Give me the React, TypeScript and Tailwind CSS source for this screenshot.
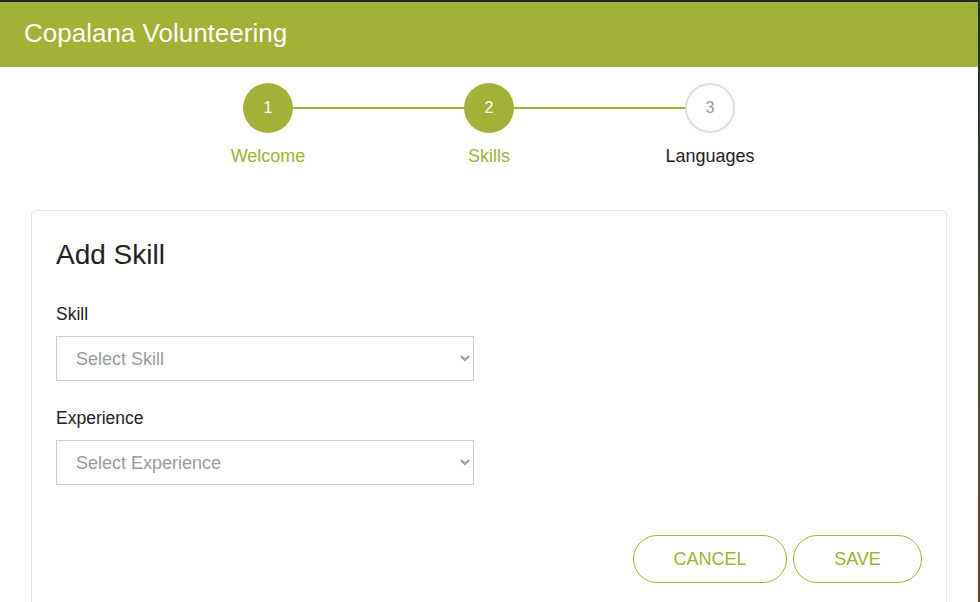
import React from "react";

function Step({ n, label, active }: { n: number; label: string; active: boolean }) {
  return (
    <div className="flex w-[221px] flex-col items-center">
      <div
        className={
          active
            ? "relative z-10 flex h-[50px] w-[50px] items-center justify-center rounded-full bg-[#a2b036] text-[16px] text-white"
            : "relative z-10 flex h-[50px] w-[50px] items-center justify-center rounded-full border-2 border-[#dedede] bg-white text-[16px] text-[#999]"
        }
      >
        {n}
      </div>
      <div
        className={
          active
            ? "mt-[11px] text-[18px] leading-[24px] text-[#a2b036]"
            : "mt-[11px] text-[18px] leading-[24px] text-[#222]"
        }
      >
        {label}
      </div>
    </div>
  );
}

export default function App() {
  return (
    <div
      className="flex min-h-[602px] w-[980px] overflow-hidden bg-gradient-to-b from-[#1d2c2c] via-[#4a4a38] to-[#5b4a2c]"
      style={{ fontFamily: '"Liberation Sans", Arial, sans-serif' }}
    >
      <div className="mt-[2px] flex h-[600px] w-[978px] flex-col bg-white">
        <div className="flex h-[65px] items-center bg-[#a2b036] pb-[2px] pl-[24px] text-[26px] text-white">
          Copalana Volunteering
        </div>
        <div className="relative mt-[16px] flex justify-center">
          <div className="absolute left-[268px] right-[268px] top-[24px] h-[2px] bg-[#a2b036]" />
          <Step n={1} label="Welcome" active />
          <Step n={2} label="Skills" active />
          <Step n={3} label="Languages" active={false} />
        </div>
        <div className="mx-[31px] mt-[42px] flex-1 rounded-t-[5px] border border-b-0 border-[#e2e2e2] px-[24px] pt-[28px]">
          <div className="text-[28px] leading-[32px] text-[#222]">Add Skill</div>
          <div className="mt-[31px] text-[17.5px] leading-[24px] text-[#222]">Skill</div>
          <select
            defaultValue=""
            className="mt-[10px] h-[45px] w-[418px] border border-[#cccccc] bg-white pl-[15px] pr-[12px] text-[18px] text-[#999]"
          >
            <option value="" disabled>
              Select Skill
            </option>
          </select>
          <div className="mt-[25px] text-[17.5px] leading-[24px] text-[#222]">Experience</div>
          <select
            defaultValue=""
            className="mt-[10px] h-[45px] w-[418px] border border-[#cccccc] bg-white pl-[15px] pr-[12px] text-[18px] text-[#999]"
          >
            <option value="" disabled>
              Select Experience
            </option>
          </select>
          <div className="mt-[50px] flex justify-end gap-[6px]">
            <button className="h-[48px] w-[154px] rounded-full border border-[#a2b036] bg-white text-[18px] text-[#a2b036]">
              CANCEL
            </button>
            <button className="h-[48px] w-[129px] rounded-full border border-[#a2b036] bg-white text-[18px] text-[#a2b036]">
              SAVE
            </button>
          </div>
        </div>
      </div>
    </div>
  );
}
